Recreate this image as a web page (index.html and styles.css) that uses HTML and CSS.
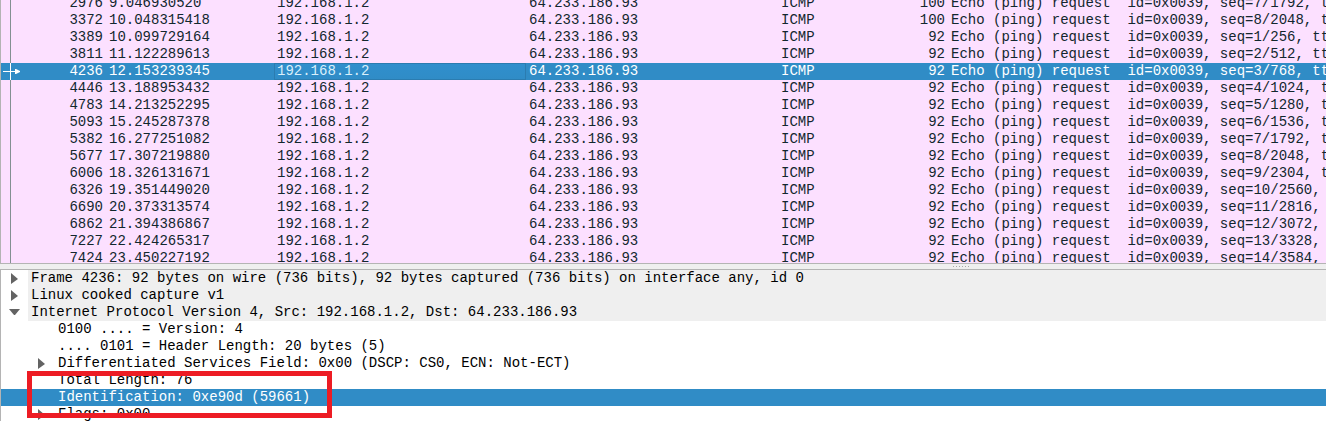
FILE: index.html
```html
<!DOCTYPE html>
<html lang="en">
<head>
<meta charset="utf-8">
<title>Packet capture</title>
<link rel="stylesheet" href="styles.css">
</head>
<body>
<main class="window">
<section class="packets" aria-label="Packet list">
<table class="list">
<colgroup><col class="c-mark"><col class="c-no"><col class="c-time"><col class="c-addr"><col class="c-addr"><col class="c-proto"><col class="c-len"><col></colgroup>
<tbody>
<tr><td></td><td class="num">2976</td><td>9.046930520</td><td>192.168.1.2</td><td>64.233.186.93</td><td>ICMP</td><td class="num">100</td><td>Echo (ping) request  id=0x0039, seq=7/1792, ttl=1</td></tr>
<tr><td></td><td class="num">3372</td><td>10.048315418</td><td>192.168.1.2</td><td>64.233.186.93</td><td>ICMP</td><td class="num">100</td><td>Echo (ping) request  id=0x0039, seq=8/2048, ttl=1</td></tr>
<tr><td></td><td class="num">3389</td><td>10.099729164</td><td>192.168.1.2</td><td>64.233.186.93</td><td>ICMP</td><td class="num">92</td><td>Echo (ping) request  id=0x0039, seq=1/256, ttl=1</td></tr>
<tr><td></td><td class="num">3811</td><td>11.122289613</td><td>192.168.1.2</td><td>64.233.186.93</td><td>ICMP</td><td class="num">92</td><td>Echo (ping) request  id=0x0039, seq=2/512, ttl=1</td></tr>
<tr class="selected"><td class="mark"><svg class="marker" viewBox="0 0 20 17" aria-hidden="true"><path d="M9 0h1v17h-1zM2 8h12v1H2zM14 6h1l4 2v1l-4 2h-1z"/></svg></td><td class="num">4236</td><td>12.153239345</td><td class="current">192.168.1.2</td><td>64.233.186.93</td><td>ICMP</td><td class="num">92</td><td>Echo (ping) request  id=0x0039, seq=3/768, ttl=1</td></tr>
<tr><td></td><td class="num">4446</td><td>13.188953432</td><td>192.168.1.2</td><td>64.233.186.93</td><td>ICMP</td><td class="num">92</td><td>Echo (ping) request  id=0x0039, seq=4/1024, ttl=1</td></tr>
<tr><td></td><td class="num">4783</td><td>14.213252295</td><td>192.168.1.2</td><td>64.233.186.93</td><td>ICMP</td><td class="num">92</td><td>Echo (ping) request  id=0x0039, seq=5/1280, ttl=1</td></tr>
<tr><td></td><td class="num">5093</td><td>15.245287378</td><td>192.168.1.2</td><td>64.233.186.93</td><td>ICMP</td><td class="num">92</td><td>Echo (ping) request  id=0x0039, seq=6/1536, ttl=1</td></tr>
<tr><td></td><td class="num">5382</td><td>16.277251082</td><td>192.168.1.2</td><td>64.233.186.93</td><td>ICMP</td><td class="num">92</td><td>Echo (ping) request  id=0x0039, seq=7/1792, ttl=1</td></tr>
<tr><td></td><td class="num">5677</td><td>17.307219880</td><td>192.168.1.2</td><td>64.233.186.93</td><td>ICMP</td><td class="num">92</td><td>Echo (ping) request  id=0x0039, seq=8/2048, ttl=1</td></tr>
<tr><td></td><td class="num">6006</td><td>18.326131671</td><td>192.168.1.2</td><td>64.233.186.93</td><td>ICMP</td><td class="num">92</td><td>Echo (ping) request  id=0x0039, seq=9/2304, ttl=1</td></tr>
<tr><td></td><td class="num">6326</td><td>19.351449020</td><td>192.168.1.2</td><td>64.233.186.93</td><td>ICMP</td><td class="num">92</td><td>Echo (ping) request  id=0x0039, seq=10/2560, ttl=1</td></tr>
<tr><td></td><td class="num">6690</td><td>20.373313574</td><td>192.168.1.2</td><td>64.233.186.93</td><td>ICMP</td><td class="num">92</td><td>Echo (ping) request  id=0x0039, seq=11/2816, ttl=1</td></tr>
<tr><td></td><td class="num">6862</td><td>21.394386867</td><td>192.168.1.2</td><td>64.233.186.93</td><td>ICMP</td><td class="num">92</td><td>Echo (ping) request  id=0x0039, seq=12/3072, ttl=1</td></tr>
<tr><td></td><td class="num">7227</td><td>22.424265317</td><td>192.168.1.2</td><td>64.233.186.93</td><td>ICMP</td><td class="num">92</td><td>Echo (ping) request  id=0x0039, seq=13/3328, ttl=1</td></tr>
<tr><td></td><td class="num">7424</td><td>23.450227192</td><td>192.168.1.2</td><td>64.233.186.93</td><td>ICMP</td><td class="num">92</td><td>Echo (ping) request  id=0x0039, seq=14/3584, ttl=1</td></tr>
</tbody>
</table>
</section>
<div class="splitter"><svg class="grip" viewBox="0 0 18 1" aria-hidden="true"><path d="M0 0h1v1H0zM3 0h1v1H3zM6 0h1v1H6zM9 0h1v1H9zM12 0h1v1h-1zM15 0h1v1h-1z"/></svg></div>
<section class="details" aria-label="Packet details">
<ul class="tree">
<li class="item"><button class="toggle" aria-label="Expand Frame"><svg class="arrow" viewBox="0 0 11 17" aria-hidden="true"><path d="M0 3v11l7-5z"/></svg></button><span class="label head">Frame 4236: 92 bytes on wire (736 bits), 92 bytes captured (736 bits) on interface any, id 0</span></li>
<li class="item"><button class="toggle" aria-label="Expand Linux cooked capture"><svg class="arrow" viewBox="0 0 11 17" aria-hidden="true"><path d="M0 3v11l7-5z"/></svg></button><span class="label head">Linux cooked capture v1</span></li>
<li class="item"><button class="toggle" aria-label="Collapse Internet Protocol"><svg class="arrow" viewBox="0 0 11 17" aria-hidden="true"><path d="M-2 5h11l-5 6h-1z"/></svg></button><span class="label head">Internet Protocol Version 4, Src: 192.168.1.2, Dst: 64.233.186.93</span></li>
<li class="item child"><span class="toggle"></span><span class="label">0100 .... = Version: 4</span></li>
<li class="item child"><span class="toggle"></span><span class="label">.... 0101 = Header Length: 20 bytes (5)</span></li>
<li class="item child"><button class="toggle" aria-label="Expand Differentiated Services Field"><svg class="arrow" viewBox="0 0 11 17" aria-hidden="true"><path d="M0 3v11l7-5z"/></svg></button><span class="label">Differentiated Services Field: 0x00 (DSCP: CS0, ECN: Not-ECT)</span></li>
<li class="item child callout-anchor"><span class="toggle"></span><span class="label">Total Length: 76</span><span class="callout"></span></li>
<li class="item child selected"><span class="toggle"></span><span class="label">Identification: 0xe90d (59661)</span></li>
<li class="item child"><button class="toggle" aria-label="Expand Flags"><svg class="arrow" viewBox="0 0 11 17" aria-hidden="true"><path d="M0 3v11l7-5z"/></svg></button><span class="label">Flags: 0x00</span></li>
</ul>
</section>
</main>
</body>
</html>
```
FILE: styles.css
```css
* { box-sizing: border-box; }
body {
  margin: 0;
  font: 14px/17px "Liberation Mono", monospace;
  color: #000;
  background: #efefef;
}
.window {
  display: grid;
  grid-template-rows: minmax(0, 264fr) 5px minmax(0, 152fr);
  height: 100vh;
  overflow: hidden;
}
.packets {
  overflow: hidden;
  border-left: 1px solid #b4b4b4;
  border-bottom: 1px solid #b4b4b4;
  color: #12272e;
  background: linear-gradient(90deg, #fce0ff 9px, #839092 9px, #839092 10px, #fce0ff 10px);
}
/* The list is scrolled part-way into its first visible row. */
.list {
  width: 100%;
  margin-top: -5px;
  table-layout: fixed;
  border-collapse: collapse;
}
.c-mark { width: 20px; }
.c-no { width: 85px; }
.c-time { width: 168px; }
.c-addr { width: 252px; }
.c-proto { width: 84px; }
.c-len { width: 86px; }
.list td {
  height: 17px;
  padding: 0 3px;
  overflow: hidden;
  white-space: pre;
}
.list .num { text-align: right; }
.list .mark { padding: 0; }
.selected { color: #fff; background: #308cc6; }
.list .current {
  color: #d9f0fb;
  background: linear-gradient(#308fcd, #308cc6);
  box-shadow: inset 0 0 0 1px #2b7cb0;
}
.marker { display: block; width: 20px; height: 17px; fill: #fff; }
.splitter { display: flex; align-items: center; padding-left: 71.9%; }
.grip { width: 18px; height: 1px; fill: #a8a8a8; }
.details {
  overflow: hidden;
  border-top: 1px solid #b4b4b4;
  border-left: 1px solid #b4b4b4;
  background: #fff;
}
.tree { margin: 0; padding: 0; list-style: none; }
.item { display: flex; height: 17px; white-space: pre; }
.child { padding-left: 27px; }
.toggle {
  flex: none;
  width: 27px;
  padding: 0 0 0 10px;
  border: 0;
  background: none;
}
.arrow {
  display: block;
  width: 11px;
  height: 17px;
  overflow: visible;
  fill: #636363;
}
.label { flex: 1; padding-left: 3px; }
.head { background: #efefef; }
.callout-anchor { position: relative; }
.callout {
  position: absolute;
  z-index: 1;
  top: -1px;
  left: 26px;
  width: 305px;
  height: 47px;
  border: 5px solid #ed1c24;
}
```
